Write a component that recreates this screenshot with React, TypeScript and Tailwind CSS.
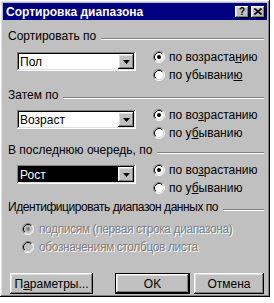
const raised =
  "shadow-[inset_-1px_-1px_#000,inset_1px_1px_#fff,inset_-2px_-2px_#808080,inset_2px_2px_#dfdfdf]";
const sunken =
  "shadow-[inset_-1px_-1px_#fff,inset_1px_1px_#808080,inset_-2px_-2px_#dfdfdf,inset_2px_2px_#000]";

function Radio({ checked, disabled }: { checked?: boolean; disabled?: boolean }) {
  return (
    <svg width="12" height="12" viewBox="0 0 12 12" className="shrink-0">
      <circle cx="6" cy="6" r="4.5" fill={disabled ? "#c0c0c0" : "#fff"} />
      <path d="M2.11 9.89 A5.5 5.5 0 0 1 9.89 2.11" stroke="#808080" strokeWidth="1" fill="none" />
      <path d="M9.89 2.11 A5.5 5.5 0 0 1 2.11 9.89" stroke="#fff" strokeWidth="1" fill="none" />
      <path d="M2.82 9.18 A4.5 4.5 0 0 1 9.18 2.82" stroke="#000" strokeWidth="1" fill="none" />
      <path d="M9.18 2.82 A4.5 4.5 0 0 1 2.82 9.18" stroke="#dfdfdf" strokeWidth="1" fill="none" />
      {checked && <circle cx="6" cy="6" r="2" fill={disabled ? "#808080" : "#000"} />}
    </svg>
  );
}

function Header({ children, tight }: { children: React.ReactNode; tight?: boolean }) {
  return (
    <div className="flex items-center h-[14px]">
      <span className={`whitespace-nowrap ${tight ? "tracking-[-0.45px]" : ""}`}>{children}</span>
      <div className="flex-1 ml-[5px] mt-[5px] h-[2px] border-t border-[#808080] border-b border-b-white" />
    </div>
  );
}

function Combo({ value, selected }: { value: string; selected?: boolean }) {
  return (
    <div className={`w-[119px] h-[19px] bg-white flex items-stretch p-[2px] ${sunken}`}>
      <div className="flex-1 flex items-center">
        <span
          className={`h-full flex items-center pl-[1px] ${selected ? "bg-black text-white w-full" : ""}`}
        >
          {value}
        </span>
      </div>
      <div className={`w-[16px] bg-[#c0c0c0] flex items-center justify-center ${raised}`}>
        <svg width="7" height="4" viewBox="0 0 7 4">
          <path d="M0 0h7L3.5 4z" fill="#000" />
        </svg>
      </div>
    </div>
  );
}

function RadioRow({ checked, children }: { checked?: boolean; children: React.ReactNode }) {
  return (
    <div className="flex items-center h-[18px]">
      <Radio checked={checked} />
      <span className="ml-[4px] whitespace-nowrap">{children}</span>
    </div>
  );
}

function SortGroup({
  label,
  value,
  selected,
  up,
  down,
  gap,
}: {
  label: string;
  value: string;
  selected?: boolean;
  up: React.ReactNode;
  down: React.ReactNode;
  gap: string;
}) {
  return (
    <div>
      <Header>{label}</Header>
      <div className={`flex items-start ${gap}`}>
        <div className="ml-[9px] mt-[4px]">
          <Combo value={value} selected={selected} />
        </div>
        <div className="ml-[17px]">
          <RadioRow checked>{up}</RadioRow>
          <RadioRow>{down}</RadioRow>
        </div>
      </div>
    </div>
  );
}

export default function App() {
  return (
    <div className="w-[274px] h-[303px] bg-white">
      <div
        className={`w-[270px] h-[297px] bg-[#c0c0c0] p-[3px] flex flex-col text-[12px] text-black ${raised}`}
        style={{ fontFamily: '"Liberation Sans", Arial, sans-serif' }}
      >
        <div className="h-[18px] bg-[#000080] flex items-center pl-[3px] pr-[2px]">
          <span className="text-white font-bold flex-1 leading-none">Сортировка диапазона</span>
          <div className={`w-[14px] h-[12px] bg-[#c0c0c0] flex items-center justify-center text-[10px] font-bold leading-none ${raised}`}>
            ?
          </div>
          <div className={`ml-[2px] w-[14px] h-[12px] bg-[#c0c0c0] flex items-center justify-center ${raised}`}>
            <svg width="8" height="7" viewBox="0 0 8 7">
              <path d="M0.5 0.5 7.5 6.5M7.5 0.5 0.5 6.5" stroke="#000" strokeWidth="1.6" />
            </svg>
          </div>
        </div>

        <div className="pl-[5px] pr-[3px] pt-[9px] flex flex-col">
          <SortGroup
            label="Сортировать по"
            value="Пол"
            gap="mt-[5px]"
            up={<>по возраста<u>н</u>ию</>}
            down={<>по убывани<u>ю</u></>}
          />
          <div className="mt-[4px]">
            <SortGroup
              label="Затем по"
              value="Возраст"
              gap="mt-[4px]"
              up={<>по во<u>з</u>растанию</>}
              down={<>по у<u>б</u>ыванию</>}
            />
          </div>
          <div className="mt-[1px]">
            <SortGroup
              label="В последнюю очередь, по"
              value="Рост"
              selected
              gap="mt-[4px]"
              up={<>по во<u>з</u>растанию</>}
              down={<>по у<u>б</u>ыванию</>}
            />
          </div>
          <div className="mt-[3px]">
            <Header tight>Идентифицировать диапазон данных по</Header>
            <div className="mt-[6px] ml-[14px] text-[#808080] tracking-[-0.4px] [text-shadow:1px_1px_0_#fff]">
              <div className="flex items-center h-[18px]">
                <Radio checked disabled />
                <span className="ml-[5px] whitespace-nowrap">подписям (первая строка диапазона)</span>
              </div>
              <div className="flex items-center h-[18px]">
                <Radio disabled />
                <span className="ml-[5px] whitespace-nowrap">обозначениям столбцов листа</span>
              </div>
            </div>
          </div>
          <div className="mt-[17px] flex items-center">
            <div className={`ml-[2px] w-[83px] h-[21px] flex items-center justify-center ${raised}`}>
              П<u>а</u>раметры...
            </div>
            <div className="ml-[22px] w-[75px] h-[21px] border border-black">
              <div className={`w-full h-full flex items-center justify-center ${raised}`}>OK</div>
            </div>
            <div className={`ml-[4px] w-[70px] h-[21px] flex items-center justify-center ${raised}`}>
              Отмена
            </div>
          </div>
        </div>
      </div>
    </div>
  );
}
